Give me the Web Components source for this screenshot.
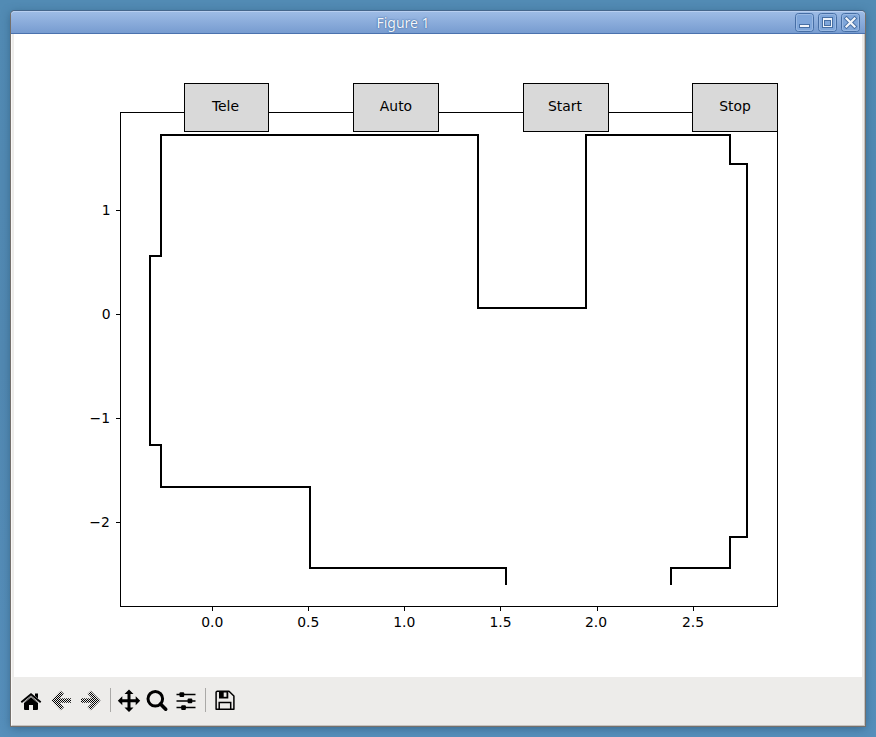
<!DOCTYPE html>
<html lang="en">
<head>
<meta charset="utf-8">
<title>Figure 1</title>
<style>
html,body{margin:0;height:100%;overflow:hidden}
body{background:linear-gradient(180deg,#528bb4,#5289b2 50%,#568fbb);font-family:"DejaVu Sans",sans-serif}
</style>
</head>
<body>
<figure-window></figure-window>
<script>
function define(name, html) {
  const t = document.createElement('template');
  t.innerHTML = html;
  customElements.define(name, class extends HTMLElement {
    constructor() {
      super();
      this.attachShadow({mode: 'open'}).append(t.content.cloneNode(true));
    }
  });
}

define('title-bar', `<style>
:host{display:grid;grid-template-columns:1fr 70px;box-sizing:border-box;height:23px;background:linear-gradient(#9dbbe5,#779cd0);border-top:1px solid #b8cff0;border-bottom:1px solid #4b72ae;box-shadow:0 -1px #45668b;border-radius:4px 4px 0 0}
.t{font:14px/22px "Noto Sans","Open Sans",sans-serif;height:21px;color:#f3f6fb;text-align:center;text-shadow:0 0 1px #315c96,0 0 2px #4973aa}
.b{display:flex;gap:4px;padding-top:1px}
svg{display:block}
</style><div class="t"><slot></slot></div><div class="b">
<svg width="19" height="20"><rect x=".5" y=".5" width="18" height="18" rx="3" fill="#7fa6da" stroke="#466ea5"/><rect x="1.5" y="1.5" width="16" height="16" rx="2" fill="none" stroke="#9ab9e3"/><rect x="4.5" y="11.5" width="10" height="3" fill="#f2f5fa" stroke="#476fa4"/></svg>
<svg width="19" height="20"><rect x=".5" y=".5" width="18" height="18" rx="3" fill="#7fa6da" stroke="#466ea5"/><rect x="1.5" y="1.5" width="16" height="16" rx="2" fill="none" stroke="#9ab9e3"/><rect x="4.5" y="4.5" width="10" height="10" fill="#eef3fa" stroke="#476fa4"/><rect x="6.5" y="7.5" width="6" height="5" fill="#7fa6da" stroke="#476fa4"/></svg>
<svg width="19" height="20"><rect x=".5" y=".5" width="18" height="18" rx="3" fill="#7fa6da" stroke="#466ea5"/><rect x="1.5" y="1.5" width="16" height="16" rx="2" fill="none" stroke="#9ab9e3"/><path d="M5.500 5.500l8 8m0-8l-8 8" stroke="#476fa4" stroke-width="4" stroke-linecap="square"/><path d="M5.500 5.500l8 8m0-8l-8 8" stroke="#f2f5fa" stroke-width="2.200" stroke-linecap="square"/></svg>
</div>`);

define('plot-button', `<style>
:host{display:block;box-sizing:border-box;height:49px;background:#d9d9d9;border:1px solid #000;font-size:13.9px;line-height:45px;text-align:center;color:#000}
</style><slot></slot>`);

define('plot-canvas', `<style>
:host{display:grid;background:#fff;height:643px}
svg,.buttons{grid-area:1/1}
svg{display:block;font-size:13.9px}
.buttons{display:grid;grid-template-columns:85px 86px 86px 86px;column-gap:84px;align-content:start;padding:49px 0 0 170px}
.buttons>:nth-child(odd){padding-right:2px}
.buttons>:nth-child(4){margin-left:-1px;margin-right:1px}
</style>
<svg width="848" height="643" viewBox="14 34 848 643">
<g fill="none" stroke="#000" shape-rendering="crispEdges">
<path d="M120.5 112.5H777.5V606.5H120.5ZM212.5 607v4M308.5 607v4M404.5 607v4M500.5 607v4M597.5 607v4M693.5 607v4M116 210.5h4M116 314.5h4M116 418.5h4M116 522.5h4"/>
<path stroke-width="2" d="M506 585V568H310V487H161V445H150V256H161V135H478V308H586V135H730V164H747V537H730V568H671V585"/>
</g>
<g text-anchor="middle"><text x="212.3" y="627">0.0</text><text x="308.3" y="627">0.5</text><text x="404.3" y="627">1.0</text><text x="500.5" y="627">1.5</text><text x="596" y="627">2.0</text><text x="693" y="627">2.5</text></g>
<g text-anchor="end"><text x="110.5" y="215">1</text><text x="110.5" y="319">0</text><text x="110" y="423">−1</text><text x="109.800" y="527">−2</text></g>
</svg>
<div class="buttons"><plot-button>Tele</plot-button><plot-button>Auto</plot-button><plot-button>Start</plot-button><plot-button>Stop</plot-button></div>`);

define('nav-toolbar', `<style>
:host{display:flex;align-items:center;height:48px;background:#edecea}
svg{display:block}
</style>
<svg width="240" height="48" viewBox="14 677 240 48">
<defs><pattern id="d" width="2" height="2" patternUnits="userSpaceOnUse"><path d="M0 0h1v1H0zM1 1h1v1H1z" fill="#000" shape-rendering="crispEdges"/></pattern></defs>
<path d="M31 696.200l7 6V709a1 1 0 0 1-1 1h-4v-5h-4v5h-4a1 1 0 0 1-1-1v-6.800z"/>
<path d="M21.300 702.200L31 694.200l9.700 8" fill="none" stroke="#000" stroke-width="1.900"/><path d="M23.800 703L31 697l7.200 6" fill="none" stroke="#b5b4b2" stroke-width=".8"/><path d="M35 693.500h3v5l-3-2.500z"/>
<g fill="none" stroke="url(#d)" stroke-width="4.400"><path d="M62.300 692.200L54.300 700.500L62.300 708.800M54 700.600L71 700.500"/><path d="M89.200 692.200L97.400 700.500L89.200 708.800M97.500 700.600L81 700.500"/></g>
<path d="M110.500 688v24M205.500 688v24" stroke="#aaa9a7" shape-rendering="crispEdges"/>
<path d="M129 689.500l4.500 4.500H130.500v5.200h5.200v-3l4.500 4.500-4.500 4.500v-3h-5.200v5.200h3L129 712l-4.500-4.600h3v-5.200h-5.200v3l-4.500-4.500 4.500-4.500v3h5.200V694h-3z"/>
<circle cx="155.300" cy="698.800" r="7.300" fill="none" stroke="#000" stroke-width="3"/><path d="M160.500 704l5.200 5.200" stroke="#000" stroke-width="3.600" stroke-linecap="round"/>
<path d="M176.500 694.500h19M176.500 701h19M176.500 707.500h19" stroke="#000" stroke-width="1.300"/>
<rect x="179.500" y="692.200" width="4.700" height="4.700" rx="1"/><rect x="187.600" y="698.600" width="4.700" height="4.700" rx="1"/><rect x="181.200" y="705.200" width="4.700" height="4.700" rx="1"/>
<g fill="none" stroke="#000" stroke-width="1.500"><path d="M217 691.300H229L233.900 696V709.300H216.100V692Z" stroke-linejoin="round"/><path d="M219.200 709v-6.500H230.700V709"/></g>
<path d="M219 691h9.300v7.500H219z"/><path d="M223.700 692.500h2.800v4.300h-2.800z" fill="#edecea"/>
</svg>`);

define('figure-window', `<style>
:host{display:block;padding:11px 11px 0}
.w{height:715px;border-radius:4px 4px 0 0;background:#edecea;box-shadow:0 0 0 1px #74706c,0 2px 10px #183c5880}
.c{display:flow-root;padding:0 2px;border-left:1px solid #faf9f8;border-right:1px solid #c5c2bf;border-bottom:1px solid #c5c2bf;height:692px;box-sizing:border-box}
</style><div class="w"><title-bar>Figure 1</title-bar><div class="c"><plot-canvas></plot-canvas><nav-toolbar></nav-toolbar></div></div>`);
</script>
</body>
</html>
